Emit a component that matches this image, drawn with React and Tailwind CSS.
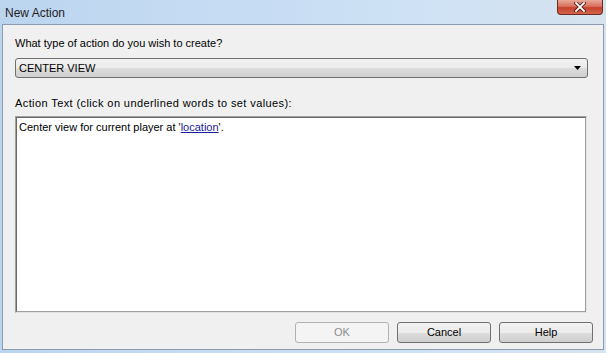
import React from 'react';

const font = { fontFamily: '"Liberation Sans", Arial, sans-serif' };

const Button = ({ children, disabled }) => (
  <button
    disabled={disabled}
    className={`w-[94px] h-[21px] rounded-[3px] border text-[11px] leading-none ${
      disabled
        ? 'border-[#adb2b5] bg-[#f4f4f4] text-[#8d8d8d]'
        : 'border-[#707070] bg-[linear-gradient(#f2f2f2_0%,#ebebeb_50%,#dddddd_51%,#cfcfcf_100%)] text-black'
    }`}
  >
    {children}
  </button>
);

export default function App() {
  return (
    <div
      className="w-[606px] h-[353px] flex flex-col bg-[linear-gradient(90deg,#bcd5ef_0%,#c6dcf3_40%,#cfe2f5_70%,#d6e3ef_100%)]"
      style={font}
    >
      {/* title bar */}
      <div className="h-[24px] flex items-start justify-between pl-[5px]">
        <span className="mt-[4px] text-[12px] text-[#1e1e1e]">New Action</span>
        <div className="mr-[3px] w-[46px] h-[15px] rounded-b-[4px] border border-t-0 border-[#6e2b24] bg-[linear-gradient(#e9a99a_0%,#d8705d_45%,#c7422d_55%,#d2644c_100%)] flex items-center justify-center">
          <svg width="12" height="10" viewBox="0 0 12 10">
            <path d="M2 1 L10 9 M10 1 L2 9" stroke="#4a1a14" strokeWidth="3.6" strokeLinecap="square" />
            <path d="M2 1 L10 9 M10 1 L2 9" stroke="#ffffff" strokeWidth="1.8" strokeLinecap="square" />
          </svg>
        </div>
      </div>

      {/* client area */}
      <div className="flex-1 mx-[2px] mb-[3px] border border-[#8b9cb0] bg-[#f0f0f0] flex flex-col pl-[12px] pb-[6px]">
        <div className="mt-[11px] h-[14px] leading-[14px] text-[11px] text-black">
          What type of action do you wish to create?
        </div>
        <div className="mt-[8px] w-[573px] h-[20px] rounded-[3px] border border-[#707070] bg-[linear-gradient(#f2f2f2_0%,#ebebeb_50%,#dddddd_51%,#cfcfcf_100%)] flex items-center justify-between pl-[3px] pr-[5px]">
          <span className="text-[11px] text-black">CENTER VIEW</span>
          <svg width="8" height="4" viewBox="0 0 8 4">
            <path d="M0 0 H7 L3.5 4 Z" fill="#000" />
          </svg>
        </div>
        <div className="mt-[18px] h-[14px] leading-[14px] text-[11px] tracking-[0.4px] text-black">
          Action Text (click on underlined words to set values):
        </div>
        <div className="mt-[6px] w-[572px] h-[197px] border border-[#a0a0a0] border-b-[#e3e3e3] border-r-[#e3e3e3] bg-white">
          <div className="h-full border border-[#696969] border-b-[#a0a0a0] border-r-[#a0a0a0] px-[2px] pt-[2px]">
            <p className="text-[11px] leading-[14px] text-black">
              Center view for current player at '
              <span className="text-[#1a1a9c] underline">location</span>'.
            </p>
          </div>
        </div>
        <div className="mt-[9px] flex justify-end gap-[8px] pr-[10px]">
          <Button disabled>OK</Button>
          <Button>Cancel</Button>
          <Button>Help</Button>
        </div>
      </div>
    </div>
  );
}
